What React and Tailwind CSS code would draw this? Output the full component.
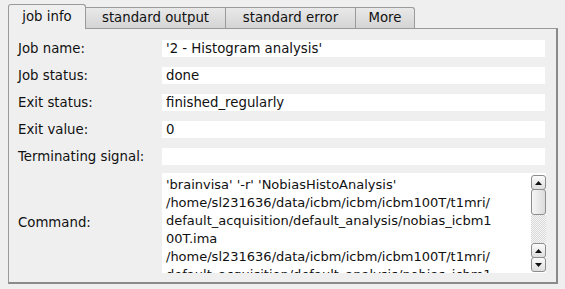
const rows = [
  ["Job name:", "'2 - Histogram analysis'"],
  ["Job status:", "done"],
  ["Exit status:", "finished_regularly"],
  ["Exit value:", "0"],
  ["Terminating signal:", ""],
];

const commandLines = [
  "'brainvisa' '-r' 'NobiasHistoAnalysis'",
  "/home/sl231636/data/icbm/icbm/icbm100T/t1mri/",
  "default_acquisition/default_analysis/nobias_icbm1",
  "00T.ima",
  "/home/sl231636/data/icbm/icbm/icbm100T/t1mri/",
  "default_acquisition/default_analysis/nobias_icbm1",
];

// ── little arrow button of the scroll bar ─────────────
const ArrowButton = ({ up = true, className = "" }) => (
  <div
    className={`w-[15px] h-[15px] rounded-[3px] border border-[#8c8c8c] bg-gradient-to-b from-[#fbfbfb] to-[#dedede] flex items-center justify-center shrink-0 ${className}`}
  >
    <svg width="7" height="4" viewBox="0 0 7 4">
      {up ? (
        <path d="M0 4h7L3.5 0z" fill="#111" />
      ) : (
        <path d="M0 0h7L3.5 4z" fill="#111" />
      )}
    </svg>
  </div>
);

const tabs = [
  { label: "job info", w: "w-[78px]", active: true },
  { label: "standard output", w: "w-[141px]" },
  { label: "standard error", w: "w-[131px]" },
  { label: "More", w: "w-[60px]" },
];

export default function App() {
  return (
    <div
      className="w-[565px] h-[289px] bg-[#efefef] text-[13.3px] text-[#111] overflow-hidden"
      style={{ fontFamily: '"DejaVu Sans", Verdana, sans-serif' }}
    >
      {/* Tab bar */}
      <div className="flex items-end h-[29px] pl-[8px] -mb-px relative z-10">
        {tabs.map((t, i) =>
          t.active ? (
            <div
              key={t.label}
              className={`${t.w} h-[25px] border border-b-0 border-[#9a9a9a] rounded-t-[3px] bg-[#efefef] flex items-center justify-center pb-[1px]`}
            >
              {t.label}
            </div>
          ) : (
            <div
              key={t.label}
              className={`${t.w} h-[21px] mb-px -ml-px border border-b-0 border-[#9a9a9a] ${
                i === tabs.length - 1 ? "rounded-tr-[3px]" : ""
              } bg-gradient-to-b from-[#e9e9e9] to-[#d4d4d4] flex items-center justify-center`}
            >
              {t.label}
            </div>
          )
        )}
      </div>

      {/* Pane */}
      <div className="ml-[8px] w-[550px] h-[256px] border border-[#9a9a9a] border-r-2 border-b-2 border-r-[#8a8a8a] border-b-[#8a8a8a] pt-[11px] pl-[9px] pr-[9px] overflow-hidden">
        <div className="flex flex-col gap-[10px]">
          {rows.map(([label, value]) => (
            <div key={label} className="flex items-center h-[17px] leading-[17px]">
              <div className="w-[144px] whitespace-nowrap">{label}</div>
              <div className="w-[383px] h-[17px] bg-white flex items-center pl-[4px] whitespace-nowrap">
                {value}
              </div>
            </div>
          ))}
        </div>

        {/* Command */}
        <div className="flex items-center mt-[8px]">
          <div className="w-[144px]">Command:</div>
          <div className="w-[384px] h-[100px] bg-white flex overflow-hidden">
            <div className="flex-1 pt-[3px] pl-[4px] text-[13px] leading-[18px] overflow-hidden">
              {commandLines.map((l, i) => (
                <div key={i} className="whitespace-pre">
                  {l}
                </div>
              ))}
            </div>
            <div className="w-[15px] flex flex-col pt-[2px]">
              <ArrowButton up />
              <div className="h-[26px] -mt-px shrink-0 rounded-[3px] border border-[#8c8c8c] bg-gradient-to-r from-[#f6f6f6] to-[#dcdcdc]" />
              <div className="flex-1 bg-[repeating-conic-gradient(#d8d8d8_0_25%,#f6f6f6_0_50%)] bg-[length:2px_2px]" />
              <ArrowButton up />
              <ArrowButton up={false} className="-mt-px mb-[1px]" />
            </div>
          </div>
        </div>
      </div>
    </div>
  );
}
